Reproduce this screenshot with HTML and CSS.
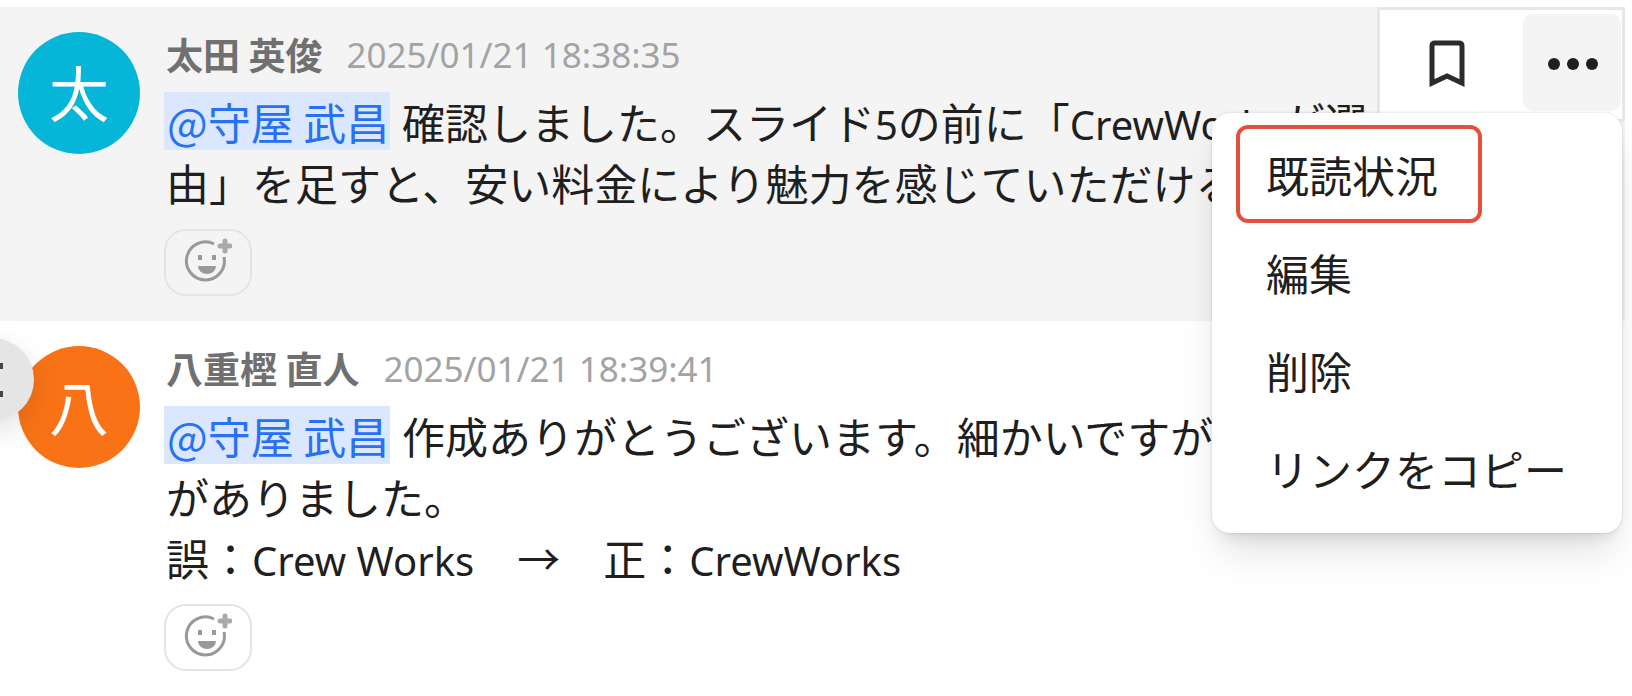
FILE: index.html
```
<!DOCTYPE html>
<html lang="ja">
<head>
    <meta charset="UTF-8">
    <meta name="viewport" content="width=device-width, initial-scale=1.0">
    <title>チャット</title>
    <link rel="stylesheet" href="styles.css">
</head>
<body>

    <main class="chat">
        <article class="message active">
            <div class="avatar cyan">太</div>
            <div class="content">
                <header class="meta">
                    <span class="name">太田 英俊</span>
                    <time class="date">2025/01/21 18:38:35</time>
                </header>
                <p class="text"><a href="#" class="mention">@守屋 武昌</a> 確認しました。スライド<span class="latin">5</span>の前に「<span class="latin">CrewWorks</span>が選<br>由」を足すと、安い料金により魅力を感じていただける</p>
                <button type="button" class="reaction" aria-label="リアクションを追加">
                    <svg width="48" height="48" viewBox="0 0 48 48" fill="none" stroke="#999" stroke-width="3">
                        <path d="M30 6A19 19 0 1 0 40 19"/>
                        <path d="M16 17v5M30 17v5" stroke-width="4"/>
                        <path d="M14 28h18a9 8 0 0 1-18 0z" fill="#999" stroke="none"/>
                        <path d="M41 3v10M36 8h10" stroke-width="5" stroke-linecap="round" stroke="#aaa"/>
                    </svg>
                </button>
            </div>

            <div class="toolbar">
                <button type="button" class="tool bookmark" aria-label="ブックマーク">
                    <svg width="38" height="48" viewBox="0 0 38 48" fill="none" stroke="#2b2b2b" stroke-width="5">
                        <path d="M4 44V7q0-3 3-3h24q3 0 3 3v37l-15-7z"/>
                    </svg>
                </button>
                <button type="button" class="tool more" aria-label="その他">
                    <svg width="52" height="16" viewBox="0 0 52 16" fill="#1f1f1f">
                        <circle cx="8" cy="9" r="6"/>
                        <circle cx="27" cy="9" r="6"/>
                        <circle cx="46" cy="9" r="6"/>
                    </svg>
                </button>
                <ul class="menu">
                    <li><button type="button" class="menu-item selected">既読状況</button></li>
                    <li><button type="button" class="menu-item">編集</button></li>
                    <li><button type="button" class="menu-item">削除</button></li>
                    <li><button type="button" class="menu-item">リンクをコピー</button></li>
                </ul>
            </div>
        </article>

        <article class="message">
            <div class="avatar orange">八</div>
            <div class="content">
                <header class="meta">
                    <span class="name">八重樫 直人</span>
                    <time class="date">2025/01/21 18:39:41</time>
                </header>
                <p class="text"><a href="#" class="mention">@守屋 武昌</a> 作成ありがとうございます。細かいですが<br>がありました。<br>誤：<span class="latin">Crew Works</span>　→　正：<span class="latin">CrewWorks</span></p>
                <button type="button" class="reaction" aria-label="リアクションを追加">
                    <svg width="48" height="48" viewBox="0 0 48 48" fill="none" stroke="#999" stroke-width="3">
                        <path d="M30 6A19 19 0 1 0 40 19"/>
                        <path d="M16 17v5M30 17v5" stroke-width="4"/>
                        <path d="M14 28h18a9 8 0 0 1-18 0z" fill="#999" stroke="none"/>
                        <path d="M41 3v10M36 8h10" stroke-width="5" stroke-linecap="round" stroke="#aaa"/>
                    </svg>
                </button>
            </div>
            <button type="button" class="collapse" aria-label="サイドバーを閉じる">
                <svg width="20" height="36" viewBox="0 0 20 36" fill="none" stroke="#444" stroke-width="6">
                    <path d="M20 4h-5L3 18l12 14h5"/>
                </svg>
            </button>
        </article>
    </main>

</body>
</html>
```

FILE: styles.css
```
* {
    margin: 0;
    padding: 0;
    box-sizing: border-box;
}

body {
    font-family: "Noto Sans CJK JP", sans-serif;
    background-color: #fff;
    color: #1f1f1f;
    overflow: hidden;
}

button {
    font: inherit;
    color: inherit;
    background: none;
    border: none;
    cursor: pointer;
}

.chat {
    padding: 7px 7px 0 0;
}

.message {
    position: relative;
    display: flex;
    gap: 24px;
    padding: 25px 0 25px 18px;
}

.message.active {
    background-color: #f4f4f4;
}

.avatar {
    flex: none;
    display: flex;
    align-items: center;
    justify-content: center;
    width: 122px;
    height: 122px;
    padding-bottom: 4px;
    border-radius: 50%;
    color: #fff;
    font-size: 60px;
    line-height: 1;
}

.cyan {
    background-color: #06b6d8;
}

.orange {
    background-color: #f97316;
}

.content {
    flex: 1;
    min-width: 0;
}

.meta {
    display: flex;
    align-items: center;
    gap: 24px;
    height: 44px;
    padding-left: 2px;
    font-size: 37px;
    white-space: nowrap;
}

.name {
    color: #707070;
    font-weight: bold;
}

.date {
    color: #a3a3a3;
    font-family: "Noto Sans", sans-serif;
    font-size: 35px;
}

.text {
    padding: 15px 0 16px 2px;
    font-size: 43px;
    line-height: 61px;
    white-space: nowrap;
}

.latin {
    font-family: "Noto Sans", sans-serif;
    font-size: 40px;
    line-height: 1;
}

.mention {
    display: inline-block;
    height: 58px;
    margin: 0 2px 0 -2px;
    padding: 0 1px 0 3px;
    line-height: 58px;
    background-color: #dbe7ff;
    color: #2671f4;
    text-decoration: none;
}

.reaction {
    display: flex;
    align-items: center;
    justify-content: center;
    width: 88px;
    height: 67px;
    padding-bottom: 2px;
    border: 2px solid #e4e4e4;
    border-radius: 22px;
}

/* hover actions */
.toolbar {
    position: absolute;
    top: 0;
    right: 0;
    z-index: 2;
    display: flex;
    gap: 10px;
    padding: 4px 1px 8px 0;
    background-color: #fff;
    border: 3px solid #e5e7eb;
}

.tool {
    display: flex;
    align-items: center;
    justify-content: center;
    width: 98px;
    height: 97px;
    border-radius: 10px;
}

.bookmark {
    width: 133px;
}

.more {
    background-color: #f4f4f4;
}

.menu {
    position: absolute;
    top: 103px;
    right: 0;
    width: 410px;
    padding: 12px 24px 16px;
    list-style: none;
    background-color: #fff;
    border-radius: 18px;
    box-shadow: 0 0 3px rgba(0, 0, 0, 0.15), 0 26px 40px -8px rgba(0, 0, 0, 0.12), 0 10px 16px -8px rgba(0, 0, 0, 0.12);
}

.menu-item {
    display: block;
    height: 98px;
    padding: 0 40px 0 26px;
    border: 4px solid transparent;
    border-radius: 12px;
    font-size: 43px;
    line-height: 90px;
    white-space: nowrap;
}

.menu-item.selected {
    border-color: #e5503c;
}

/* sidebar handle, half hidden at the left edge */
.collapse {
    position: absolute;
    top: 17px;
    left: -49px;
    display: flex;
    align-items: center;
    justify-content: center;
    width: 83px;
    height: 83px;
    border-radius: 50%;
    background-color: #e5e5e5;
    box-shadow: 0 10px 30px rgba(0, 0, 0, 0.12);
}
```
